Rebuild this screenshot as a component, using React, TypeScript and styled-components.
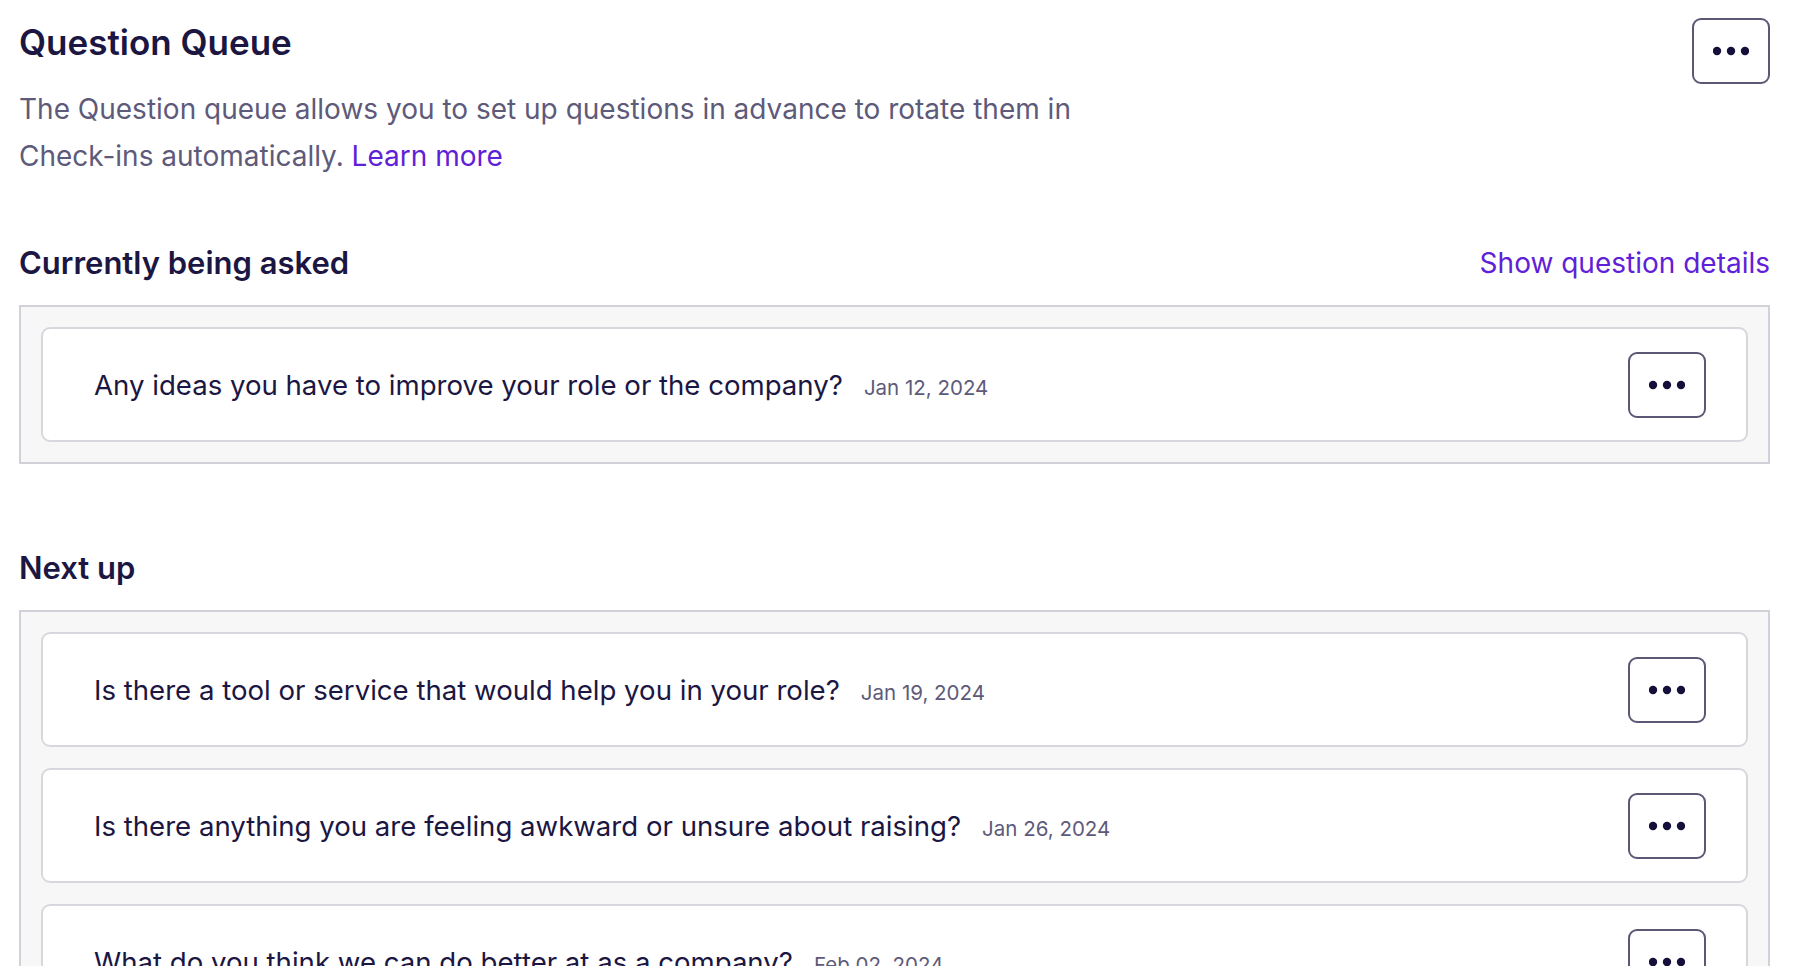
import React from "react";
import styled, { createGlobalStyle } from "styled-components";

const GlobalStyle = createGlobalStyle`
  html, body { margin: 0; padding: 0; background: #ffffff; }
  body { font-family: Inter, "Noto Sans", sans-serif; color: #1b1642; }
  * { box-sizing: border-box; }
`;

const Page = styled.div`
  padding: 18px 24px 0 19px;
`;

const Header = styled.header`
  display: flex;
  justify-content: space-between;
  align-items: flex-start;
`;

const HeaderText = styled.div`
  display: flex;
  flex-direction: column;
`;

const Title = styled.h1`
  margin: 4px 0 0;
  font-size: 35px;
  line-height: 40px;
  font-weight: 600;
  color: #1b1642;
`;

const Description = styled.p`
  margin: 24px 0 0;
  font-size: 28px;
  line-height: 47px;
  color: #5e5a7a;
`;

const Link = styled.a`
  color: #5f21d8;
  text-decoration: none;
  cursor: pointer;
`;

const Section = styled.section<{ $gap: number }>`
  margin-top: ${(p) => p.$gap}px;
`;

const SectionHead = styled.div`
  display: flex;
  justify-content: space-between;
  align-items: center;
  height: 40px;
  margin-bottom: 22px;
`;

const SectionTitle = styled.h2`
  margin: 0;
  font-size: 31px;
  line-height: 40px;
  font-weight: 600;
  color: #1b1642;
`;

const DetailsLink = styled(Link)`
  font-size: 28px;
  line-height: 40px;
`;

const Panel = styled.div`
  background: #f7f7f8;
  border: 2px solid #d2d1d9;
  padding: 20px;
  display: flex;
  flex-direction: column;
  gap: 21px;
`;

const Card = styled.div`
  height: 115px;
  background: #ffffff;
  border: 2px solid #d8d7de;
  border-radius: 9px;
  display: flex;
  align-items: center;
  justify-content: space-between;
  padding: 0 40px 0 51px;
`;

const QuestionLine = styled.div`
  display: flex;
  align-items: baseline;
  gap: 21px;
`;

const QuestionText = styled.span`
  font-size: 27.6px;
  color: #1b1642;
`;

const DateText = styled.span`
  font-size: 20.5px;
  color: #5e5a7a;
`;

const MenuButton = styled.button`
  width: 78px;
  height: 66px;
  flex: none;
  border: 2px solid #5b5876;
  border-radius: 9px;
  background: #ffffff;
  display: flex;
  align-items: center;
  justify-content: center;
  padding: 0;
  cursor: pointer;
`;

const Dots = () => (
  <svg width="36" height="10" viewBox="0 0 36 10" aria-hidden>
    <circle cx="4" cy="5" r="4.2" fill="#14103a" />
    <circle cx="18" cy="5" r="4.2" fill="#14103a" />
    <circle cx="32" cy="5" r="4.2" fill="#14103a" />
  </svg>
);

type Q = { text: string; date: string };

const current: Q[] = [
  { text: "Any ideas you have to improve your role or the company?", date: "Jan 12, 2024" },
];

const next: Q[] = [
  { text: "Is there a tool or service that would help you in your role?", date: "Jan 19, 2024" },
  { text: "Is there anything you are feeling awkward or unsure about raising?", date: "Jan 26, 2024" },
  { text: "What do you think we can do better at as a company?", date: "Feb 02, 2024" },
];

const QuestionCard = ({ q }: { q: Q }) => (
  <Card>
    <QuestionLine>
      <QuestionText>{q.text}</QuestionText>
      <DateText>{q.date}</DateText>
    </QuestionLine>
    <MenuButton aria-label="More options">
      <Dots />
    </MenuButton>
  </Card>
);

export default function App() {
  return (
    <Page>
      <GlobalStyle />
      <Header>
        <HeaderText>
          <Title>Question Queue</Title>
          <Description>
            The Question queue allows you to set up questions in advance to rotate them in
            <br />
            Check-ins automatically. <Link>Learn more</Link>
          </Description>
        </HeaderText>
        <MenuButton aria-label="More options">
          <Dots />
        </MenuButton>
      </Header>

      <Section $gap={63}>
        <SectionHead>
          <SectionTitle>Currently being asked</SectionTitle>
          <DetailsLink>Show question details</DetailsLink>
        </SectionHead>
        <Panel>
          {current.map((q) => (
            <QuestionCard key={q.text} q={q} />
          ))}
        </Panel>
      </Section>

      <Section $gap={84}>
        <SectionHead>
          <SectionTitle>Next up</SectionTitle>
        </SectionHead>
        <Panel>
          {next.map((q) => (
            <QuestionCard key={q.text} q={q} />
          ))}
        </Panel>
      </Section>
    </Page>
  );
}
